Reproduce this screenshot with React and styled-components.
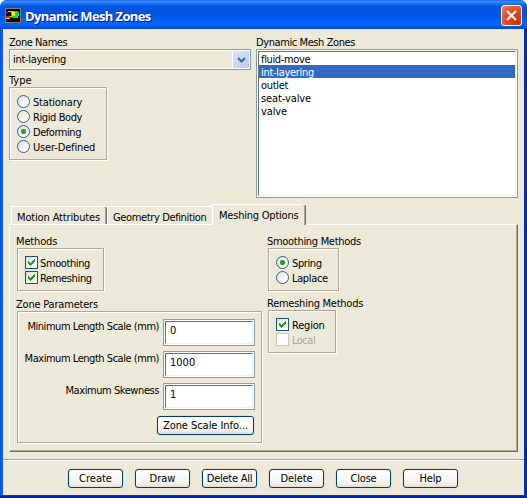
import React from "react";
import styled, { createGlobalStyle, css } from "styled-components";

const Global = createGlobalStyle`
  * { box-sizing: border-box; }
  html, body { margin: 0; padding: 0; }
  body {
    width: 527px; height: 498px; overflow: hidden; background: #fff;
    font-family: "DejaVu Sans Condensed", "DejaVu Sans", sans-serif;
    font-stretch: condensed;
    font-size: 11px; line-height: 13px; color: #000;
  }
`;

const Window = styled.div`
  width: 527px; height: 498px;
  display: flex; flex-direction: column;
  background: linear-gradient(90deg, #0831d9 0, #166aee 1px, #0855dd 3px, #0831d9 4px, #0831d9 524px, #001ea0 527px);
  border-radius: 7px 7px 0 0;
  overflow: hidden;
`;
const TitleBar = styled.header`
  height: 29px; flex: none;
  display: flex; align-items: center;
  padding: 1px 5px 0 5px;
  background: linear-gradient(180deg, #0858d8 0, #3a8cff 1px, #2a7cf8 3px, #0560e8 5px, #0053df 9px, #0055e5 16px, #0062fa 21px, #0066ff 24px, #0058ea 27px, #003dc8 29px);
`;
const Title = styled.h1`
  margin: 2px 0 0 4px; flex: 1;
  font: 700 13px/16px "Open Sans", "Noto Sans", sans-serif;
  letter-spacing: -0.62px;
  white-space: nowrap;
  color: #fff; text-shadow: 1px 1px 0 #0a1883;
`;
const CloseBox = styled.button`
  width: 21px; height: 21px; padding: 0; margin-top: 1px;
  display: grid; place-items: center;
  border: 1px solid #fff; border-radius: 3px;
  background: radial-gradient(circle at 85% 85%, #c83408 0, #dc4a20 45%, #e4623c 75%, #ec9478 100%);
`;
const Body = styled.main`
  margin: 0 3px; height: 466px; flex: none;
  background: #ece9d8;
  display: flex; flex-direction: column;
`;
const BottomEdge = styled.div`
  height: 3px;
  background: linear-gradient(180deg, #0831d9, #001ea0);
`;
const Top = styled.section`
  display: grid; grid-template-columns: 242px 262px; column-gap: 5px;
  padding: 7px 0 0 6px; height: 175px; flex: none;
`;
const Column = styled.div`
  display: flex; flex-direction: column; align-items: flex-start;
`;
const Text = styled.span`
  display: block; white-space: nowrap; height: 13px;
  letter-spacing: ${(p) => p.$track || 0}px;
`;
const Combo = styled.div`
  width: 242px; height: 21px; margin: 0 0 4px;
  display: flex; align-items: center; justify-content: space-between;
  border: 1px solid #7f9db9; padding: 1px 1px 1px 3px;
  box-shadow: inset 0 0 0 1px #fff;
`;
const Arrow = styled.span`
  width: 16px; height: 17px; display: grid; place-items: center;
  border-radius: 2px; background: linear-gradient(135deg, #d8e4ff, #b9ccf6);
  box-shadow: -1px 0 0 #fff;
`;
const Group = styled.div`
  width: ${(p) => p.$w}px; height: ${(p) => p.$h}px;
  margin: ${(p) => p.$margin || "0"};
  border: 1px solid #aca899;
  box-shadow: inset 1px 1px 0 #fff, 1px 1px 0 #fff;
  padding: 7px 0 0 7px;
`;
const Option = styled.label`
  display: flex; height: 15px; gap: ${(p) => p.$gap || 3}px;
  color: ${(p) => (p.$disabled ? "#aca899" : "#000")};
  ${Text} { margin-top: 1px; }
`;
const Radio = styled.span`
  width: 13px; height: 13px; border-radius: 50%; flex: none;
  border: 1px solid #2c628f; display: grid; place-items: center;
  background: linear-gradient(135deg, #dcdcd7, #fff 75%);
  ${(p) => p.$on && css`
    &::after { content: ""; width: 5px; height: 5px; border-radius: 2px; background: #21a121; }
  `}
`;
const Box = styled.span`
  width: 13px; height: 13px; flex: none; display: grid; place-items: center;
  border: 1px solid ${(p) => (p.$disabled ? "#cac8bb" : "#1c5180")};
  background: ${(p) => (p.$disabled ? "#fff" : "linear-gradient(135deg, #dcdcd7, #fff 75%)")};
`;
const ListBox = styled.div`
  width: 262px; height: 149px; border: 1px solid #7f9db9; padding: 1px; background: #fff;
`;
const ListInner = styled.div`
  height: 100%;
  border: 1px solid; border-color: #716f64 #f1efe2 #f1efe2 #716f64;
`;
const Item = styled.div`
  height: 13px; padding: 1px 0 0 2px;
  ${(p) => p.$selected && css`background: #316ac5; color: #fff;`}
`;
const Tabs = styled.nav`
  height: 20px; padding-left: 8px; flex: none;
  display: flex; align-items: flex-end;
`;
const Tab = styled.div`
  width: ${(p) => p.$w}px; height: ${(p) => (p.$active ? 21 : 18)}px;
  margin-bottom: ${(p) => (p.$active ? -1 : 0)}px;
  padding: ${(p) => (p.$active ? "4px 0 0 6px" : "4px 0 0 5px")};
  z-index: 1;
  border: solid #fff; border-width: 1px 0 0 1px; border-radius: 2px 2px 0 0;
  background: #ece9d8;
  box-shadow: ${(p) => (p.$edge ? "inset -1px 0 0 #716f64, inset -2px 0 0 #aca899" : "none")};
`;
const Panel = styled.section`
  width: 509px; height: 228px; margin-left: 6px; flex: none;
  border: solid; border-width: 1px; border-color: #fff #716f64 #716f64 #fff;
  box-shadow: inset -1px -1px 0 #aca899;
  padding: 10px 0 0 6px;
  display: grid; grid-template-columns: 251px 1fr;
`;
const Params = styled.div`
  width: 245px; height: 132px; margin-left: 1px;
  border: 1px solid #aca899;
  box-shadow: inset 1px 1px 0 #fff, 1px 1px 0 #fff;
  padding: 7px 6px 0 0;
  display: flex; flex-direction: column; align-items: flex-end;
`;
const Field = styled.div`
  display: flex; gap: 4px; height: 32px;
  > ${Text} { margin-top: 1px; }
`;
const Input = styled.div`
  width: 92px; height: 27px; border: 1px solid #7f9db9; padding: 1px; background: #fff;
  > div {
    height: 100%; padding: 2px 0 0 4px;
    border: 1px solid; border-color: #716f64 #f1efe2 #f1efe2 #716f64;
  }
`;
const Button = styled.button`
  width: ${(p) => p.$w || 55}px; height: 19px; padding: 0;
  display: flex; align-items: center; justify-content: center;
  font: inherit; color: #000; flex: none;
  border: 1px solid #003c74; border-radius: 3px;
  background: linear-gradient(180deg, #fff, #f4f3ee 75%, #e2dfd6);
  box-shadow: 0 0 0 1px #e4e1d0;
`;
const Footer = styled.footer`
  margin-top: 7px; height: 36px; padding: 9px 0 0 65px;
  border-top: 1px solid #aca899; box-shadow: inset 0 1px 0 #fff;
  display: flex; gap: 12px;
`;
const ZoneButton = styled(Button)`
  margin: 1px 1px 0 0;
`;

const AppIcon = () => (
  <svg width="16" height="15" viewBox="0 0 16 15" shapeRendering="crispEdges">
    <path fill="#807c70" d="M0 0h16v15H0z" />
    <path fill="#100808" d="M1 1h14v13H1z" />
    <path fill="#e82008" d="M1 4h2v1H1zM1 8h5v2H1z" />
    <path fill="#f0d800" d="M3 3h3v1H3zM5 8h3v1H5zM1 10h4v1H1z" />
    <path fill="#b0f000" d="M6 3h6v5H7V5H6z" />
    <path fill="#f0f000" d="M7 4h3v3H7z" />
    <path fill="#18d838" d="M8 3h5v1h1v4h-1v2H7V8h3V4H8z" />
    <path fill="#00d8d8" d="M13 4h1v4h-1zM12 8h1v2h-1z" />
    <path fill="#f04000" d="M6 5h1v3H6z" />
  </svg>
);
const Check = () => (
  <svg width="7" height="7" viewBox="0 0 7 7" shapeRendering="crispEdges">
    <path fill="#21a121" d="M0 2h1v1h1v1h1V3h1V2h1V1h1V0h1v3H6v1H5v1H4v1H3v1H2V6H1V5H0z" />
  </svg>
);
const RadioOption = ({ on, track, children }) => (
  <Option><Radio $on={on} /><Text $track={track}>{children}</Text></Option>
);
const CheckOption = ({ on, disabled, track, gap, children }) => (
  <Option $disabled={disabled} $gap={gap}>
    <Box $disabled={disabled}>{on && <Check />}</Box>
    <Text $track={track}>{children}</Text>
  </Option>
);

const zones = [
  ["fluid-move", -0.35],
  ["int-layering", -0.3],
  ["outlet", -0.3],
  ["seat-valve", -0.1],
  ["valve", -0.1],
];
const fields = [
  ["Minimum Length Scale (mm)", "0", -0.46],
  ["Maximum Length Scale (mm)", "1000", -0.46],
  ["Maximum Skewness", "1", -0.43],
];
const actions = [
  ["Create", 0],
  ["Draw", 0],
  ["Delete All", -0.25],
  ["Delete", -0.1],
  ["Close", -0.2],
  ["Help", -0.2],
];

export default function App() {
  return (
    <>
      <Global />
      <Window>
        <TitleBar>
          <AppIcon />
          <Title>Dynamic Mesh Zones</Title>
          <CloseBox aria-label="Close window">
            <svg width="13" height="13" viewBox="0 0 13 13">
              <path d="M2 2l9 9M11 2l-9 9" stroke="#fff" strokeWidth="2" />
            </svg>
          </CloseBox>
        </TitleBar>
        <Body>
          <Top>
            <Column>
              <Text $track={-0.45}>Zone Names</Text>
              <Combo>
                <Text $track={-0.3}>int-layering</Text>
                <Arrow>
                  <svg width="9" height="6" viewBox="0 0 9 6">
                    <path d="M1 1l3.5 3.5L8 1" fill="none" stroke="#4d6185" strokeWidth="2" />
                  </svg>
                </Arrow>
              </Combo>
              <Text>Type</Text>
              <Group $w={98} $h={73}>
                <RadioOption track={-0.2}>Stationary</RadioOption>
                <RadioOption track={-0.4}>Rigid Body</RadioOption>
                <RadioOption track={-0.45} on>Deforming</RadioOption>
                <RadioOption track={-0.15}>User-Defined</RadioOption>
              </Group>
            </Column>
            <Column>
              <Text $track={-0.41}>Dynamic Mesh Zones</Text>
              <ListBox>
                <ListInner>
                  {zones.map(([name, track]) => (
                    <Item key={name} $selected={name === "int-layering"}>
                      <Text $track={track}>{name}</Text>
                    </Item>
                  ))}
                </ListInner>
              </ListBox>
            </Column>
          </Top>
          <Tabs>
            <Tab $w={96} $edge><Text $track={-0.15}>Motion Attributes</Text></Tab>
            <Tab $w={105}><Text $track={-0.37}>Geometry Definition</Text></Tab>
            <Tab $w={94} $edge $active><Text $track={-0.22}>Meshing Options</Text></Tab>
          </Tabs>
          <Panel>
            <Column>
              <Text $track={-0.15}>Methods</Text>
              <Group $w={87} $h={43} $margin="0 0 7px 1px">
                <CheckOption gap={2} track={-0.4} on>Smoothing</CheckOption>
                <CheckOption gap={2} track={-0.35} on>Remeshing</CheckOption>
              </Group>
              <Text $track={-0.2}>Zone Parameters</Text>
              <Params>
                {fields.map(([name, value, track]) => (
                  <Field key={name}>
                    <Text $track={track}>{name}</Text>
                    <Input><div>{value}</div></Input>
                  </Field>
                ))}
                <ZoneButton $w={97}><Text $track={-0.05}>Zone Scale Info...</Text></ZoneButton>
              </Params>
            </Column>
            <Column>
              <Text $track={-0.3}>Smoothing Methods</Text>
              <Group $w={71} $h={43} $margin="0 0 6px 1px">
                <RadioOption track={-0.4} on>Spring</RadioOption>
                <RadioOption track={-0.35}>Laplace</RadioOption>
              </Group>
              <Text $track={-0.25}>Remeshing Methods</Text>
              <Group $w={68} $h={43} $margin="0 0 0 1px">
                <CheckOption track={-0.2} on>Region</CheckOption>
                <CheckOption track={-0.5} disabled>Local</CheckOption>
              </Group>
            </Column>
          </Panel>
          <Footer>
            {actions.map(([name, track]) => (
              <Button key={name}><Text $track={track}>{name}</Text></Button>
            ))}
          </Footer>
        </Body>
        <BottomEdge />
      </Window>
    </>
  );
}
